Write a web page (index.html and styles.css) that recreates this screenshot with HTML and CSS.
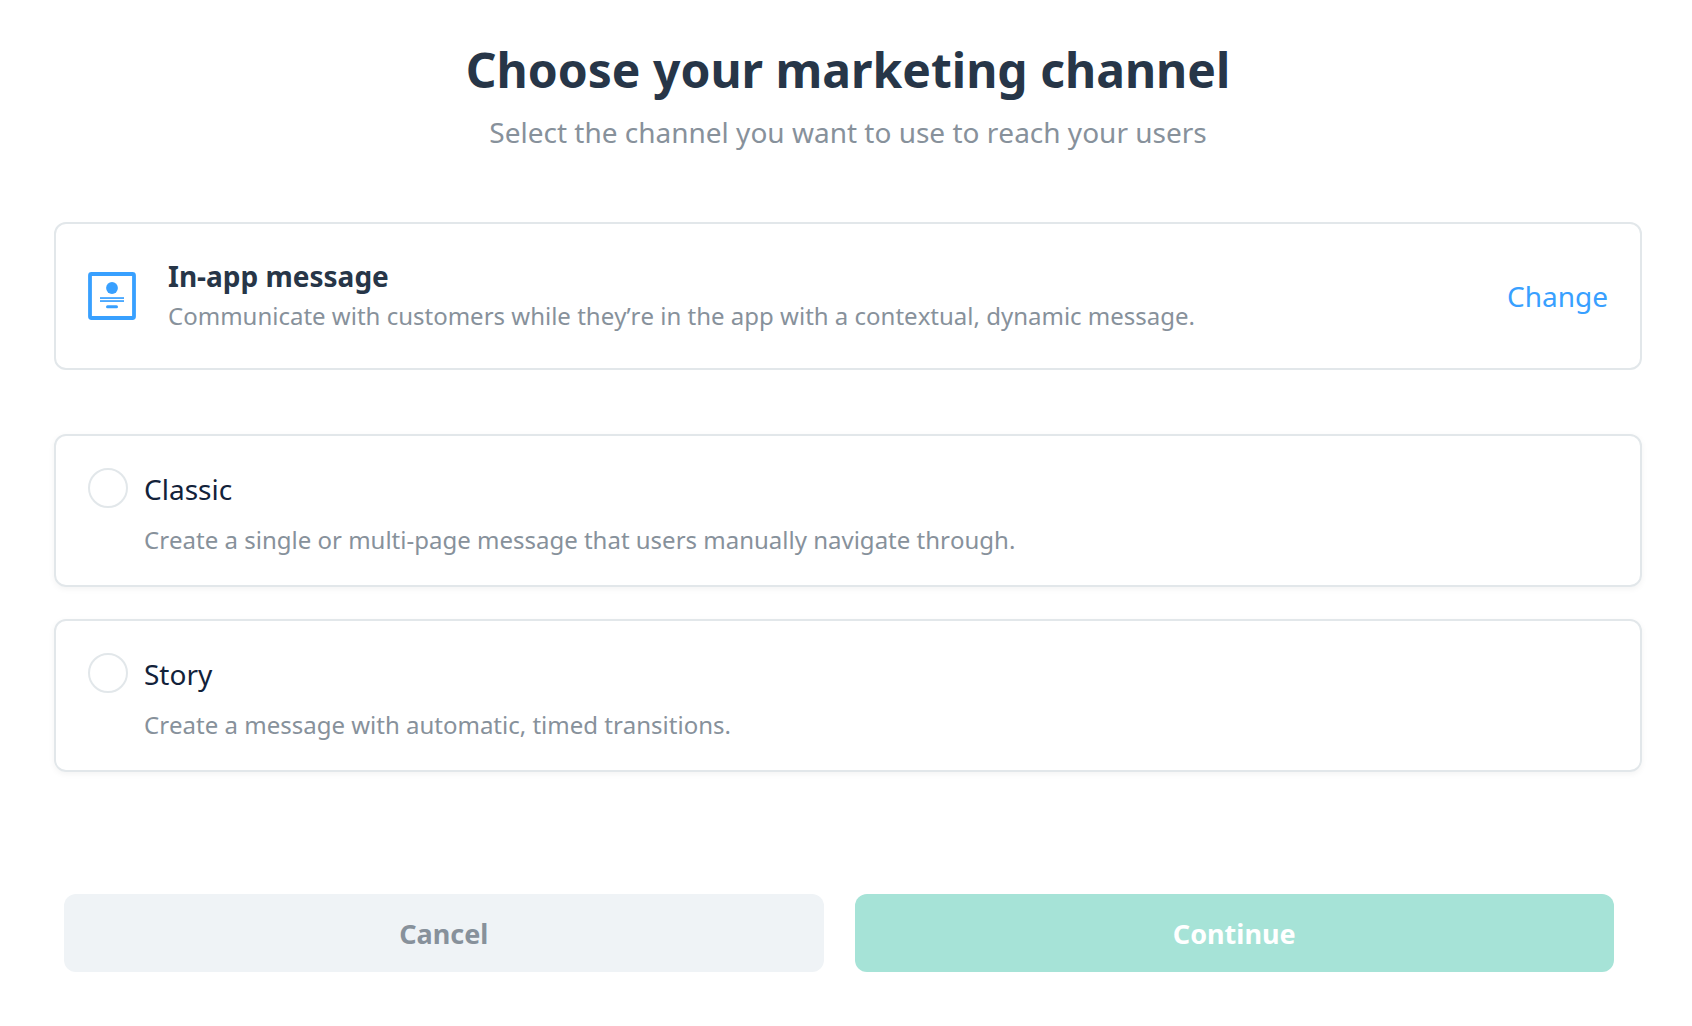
FILE: index.html
```html
<!DOCTYPE html>
<html lang="en">
<head>
  <meta charset="UTF-8">
  <title>Choose your marketing channel</title>
  <link rel="stylesheet" href="styles.css">
</head>
<body>

  <div class="header">
    <h1>Choose your marketing channel</h1>
    <p>Select the channel you want to use to reach your users</p>
  </div>

  <div class="card channel">
    <svg class="channel-icon" viewBox="0 0 48 48" fill="#38a0ff" aria-hidden="true">
      <rect x="2" y="2" width="44" height="44" rx="1.5" fill="none" stroke="#38a0ff" stroke-width="3.8"/>
      <circle cx="24" cy="16" r="5.9"/>
      <rect x="12" y="25.2" width="24" height="1.7"/>
      <rect x="12" y="28.2" width="24" height="1.7"/>
      <rect x="18" y="33.2" width="12" height="3" rx="1.5"/>
    </svg>
    <div class="channel-text">
      <h2>In-app message</h2>
      <p>Communicate with customers while they’re in the app with a contextual, dynamic message.</p>
    </div>
    <a href="#">Change</a>
  </div>

  <div class="options">
    <div class="card option">
      <input type="radio" name="type" id="classic">
      <div class="option-text">
        <label for="classic">Classic</label>
        <p>Create a single or multi-page message that users manually navigate through.</p>
      </div>
    </div>
    <div class="card option">
      <input type="radio" name="type" id="story">
      <div class="option-text">
        <label for="story">Story</label>
        <p>Create a message with automatic, timed transitions.</p>
      </div>
    </div>
  </div>

  <div class="buttons">
    <button class="cancel">Cancel</button>
    <button class="continue">Continue</button>
  </div>

</body>
</html>
```
FILE: styles.css
```css
* {
  box-sizing: border-box;
}
body {
  margin: 0;
  padding: 35px 50px 54px 54px;
  font-family: "Noto Sans", sans-serif;
  font-kerning: none;
  color: #273648;
  background-color: #fff;
}
h1, h2, p {
  margin: 0;
}
p {
  color: #87919b;
}
.header {
  text-align: center;
}
.header h1 {
  font-size: 48px;
  line-height: 70px;
}
.header p {
  font-size: 28px;
  line-height: 54px;
}
.card {
  display: flex;
  border: 2px solid #e2e7ea;
  border-radius: 12px;
}

/* Selected channel */
.channel {
  align-items: center;
  gap: 32px;
  margin-top: 63px;
  padding: 32px;
}
.channel-icon {
  width: 48px;
  height: 48px;
}
.channel-text {
  flex: 1;
  padding-bottom: 2px;
}
.channel h2 {
  margin-bottom: 2px;
  font-size: 28px;
  line-height: 40px;
}
.channel p, .option p {
  font-size: 24px;
  line-height: 36px;
}
.channel a {
  color: #38a0ff;
  font-size: 28px;
  text-decoration: none;
}

/* Message types */
.options {
  display: flex;
  flex-direction: column;
  gap: 32px;
  margin-top: 64px;
}
.option {
  gap: 16px;
  padding: 32px 32px 27px;
  box-shadow: 0 2px 6px rgba(0,0,0,0.05);
}
.option input {
  appearance: none;
  width: 40px;
  height: 40px;
  margin: 0;
  border: 2px solid #e2e7ea;
  border-radius: 50%;
}
.option input:checked {
  border: 12px solid #38a0ff;
}
.option label {
  display: block;
  color: #12223a;
  font-size: 28px;
  line-height: 42px;
}
.option p {
  margin-top: 12px;
}

.buttons {
  display: flex;
  gap: 31px;
  margin-top: 122px;
  padding: 0 28px 0 10px;
}
.buttons button {
  flex: 1;
  height: 78px;
  border: none;
  border-radius: 12px;
  font-family: inherit;
  font-size: 27px;
  font-weight: bold;
  cursor: pointer;
}
.cancel {
  background-color: #eff3f6;
  color: #87919b;
}
.continue {
  background-color: #a6e3d7;
  color: #fff;
}
```
